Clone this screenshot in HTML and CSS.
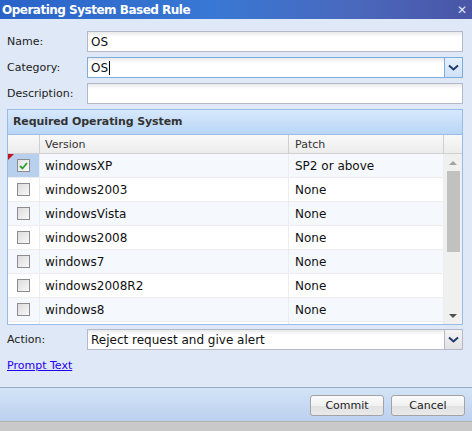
FILE: index.html
```html
<!DOCTYPE html>
<html lang="en">
<head>
    <meta charset="UTF-8">
    <title>Operating System Based Rule</title>
    <link rel="stylesheet" href="styles.css">
</head>
<body>
    <div class="window">
        <div class="titlebar">
            <span class="title">Operating System Based Rule</span>
            <span class="close">&#x2715;</span>
        </div>

        <div class="content">
            <div class="field">
                <label>Name:</label>
                <div class="input"><span>OS</span></div>
            </div>
            <div class="field">
                <label>Category:</label>
                <div class="input combo focus"><span>OS<i class="caret"></i></span>
                    <div class="trigger blue"><svg width="11" height="7" viewBox="0 0 11 7"><path d="M1 1.5 L5.5 5.5 L10 1.5" fill="none" stroke="#1f3a6e" stroke-width="2"/></svg></div>
                </div>
            </div>
            <div class="field">
                <label>Description:</label>
                <div class="input"><span></span></div>
            </div>

            <!-- grid -->
            <div class="panel">
                <div class="panel-header">Required Operating System</div>
                <div class="col-header">
                    <div class="c-check"></div>
                    <div class="c-version">Version</div>
                    <div class="c-patch">Patch</div>
                    <div class="c-scroll"></div>
                </div>
                <div class="grid-body">
                    <div class="rows">
                        <div class="row alt">
                            <div class="c-check selected"><span class="dirty"></span><span class="box checked"><svg width="9" height="8" viewBox="0 0 9 8"><path d="M1 4 L3.5 6.5 L8 1" fill="none" stroke="#2f9e2f" stroke-width="1.8"/></svg></span></div>
                            <div class="c-version">windowsXP</div>
                            <div class="c-patch">SP2 or above</div>
                        </div>
                        <div class="row">
                            <div class="c-check"><span class="box"></span></div>
                            <div class="c-version">windows2003</div>
                            <div class="c-patch">None</div>
                        </div>
                        <div class="row alt">
                            <div class="c-check"><span class="box"></span></div>
                            <div class="c-version">windowsVista</div>
                            <div class="c-patch">None</div>
                        </div>
                        <div class="row">
                            <div class="c-check"><span class="box"></span></div>
                            <div class="c-version">windows2008</div>
                            <div class="c-patch">None</div>
                        </div>
                        <div class="row alt">
                            <div class="c-check"><span class="box"></span></div>
                            <div class="c-version">windows7</div>
                            <div class="c-patch">None</div>
                        </div>
                        <div class="row">
                            <div class="c-check"><span class="box"></span></div>
                            <div class="c-version">windows2008R2</div>
                            <div class="c-patch">None</div>
                        </div>
                        <div class="row alt">
                            <div class="c-check"><span class="box"></span></div>
                            <div class="c-version">windows8</div>
                            <div class="c-patch">None</div>
                        </div>
                        <!-- next row, scrolled out of view -->
                        <div class="row">
                            <div class="c-check"></div>
                            <div class="c-version"></div>
                            <div class="c-patch"></div>
                        </div>
                    </div>
                    <div class="scrollbar">
                        <span class="arrow up"></span>
                        <div class="thumb"></div>
                        <span class="arrow down"></span>
                    </div>
                </div>
            </div>

            <div class="field action">
                <label>Action:</label>
                <div class="input combo"><span>Reject request and give alert</span>
                    <div class="trigger"><svg width="11" height="7" viewBox="0 0 11 7"><path d="M1 1.5 L5.5 5.5 L10 1.5" fill="none" stroke="#1f3a6e" stroke-width="2"/></svg></div>
                </div>
            </div>

            <a class="prompt" href="#">Prompt Text</a>
        </div>

        <div class="footer">
            <button class="btn">Commit</button>
            <button class="btn">Cancel</button>
        </div>
        <div class="statusbar"></div>
    </div>
</body>
</html>
```

FILE: styles.css
```css
body {
    margin: 0;
    padding: 0;
    font-family: "DejaVu Sans", Verdana, sans-serif;
    font-size: 11px;
    color: #222;
}
.window {
    width: 472px;
    height: 431px;
    display: flex;
    flex-direction: column;
    background-color: #dfe8f6;
    overflow: hidden;
}

/* title bar */
.titlebar {
    height: 19px;
    flex: none;
    display: flex;
    align-items: center;
    justify-content: space-between;
    padding: 0 5px 0 2px;
    background: linear-gradient(90deg, #2a63c8 0%, #3878d4 45%, #4a68bd 75%, #4a55a6 100%);
    color: #fff;
}
.title {
    font-weight: bold;
    font-size: 12px;
    letter-spacing: -0.5px;
}
.close {
    font-size: 12px;
    font-weight: bold;
    color: #dde4f2;
}

/* form */
.content {
    flex: 1;
    padding: 12px 9px 0 7px;
    display: flex;
    flex-direction: column;
}
.field {
    display: flex;
    align-items: center;
    height: 21px;
    margin-bottom: 5px;
}
.field label {
    width: 80px;
    flex: none;
    color: #222;
}
.input {
    flex: 1;
    height: 19px;
    border: 1px solid #b5b8c8;
    background: linear-gradient(#e9e9e9, #fff 5px);
    display: flex;
    align-items: center;
    font-size: 12px;
    color: #111;
}
.input span {
    padding-left: 3px;
    flex: 1;
    display: flex;
    align-items: center;
}
.input.focus {
    border-color: #7eadd9;
}
.caret {
    display: inline-block;
    width: 1px;
    height: 14px;
    background: #000;
    margin-left: 1px;
}
.trigger {
    width: 17px;
    height: 19px;
    flex: none;
    border-left: 1px solid #b5b8c8;
    background: linear-gradient(#f4f4f4, #e2e2e2);
    display: flex;
    align-items: center;
    justify-content: center;
}
.trigger.blue {
    border-left-color: #7eadd9;
    background: linear-gradient(#e5f0fd, #cfe1f8);
}

/* grid panel */
.panel {
    height: 214px;
    border: 1px solid #99bbe8;
    background: #fff;
    display: flex;
    flex-direction: column;
    margin-bottom: 4px;
}
.panel-header {
    height: 25px;
    flex: none;
    box-sizing: border-box;
    padding: 5px 5px 0;
    font-weight: bold;
    letter-spacing: -0.1px;
    color: #333;
    background: linear-gradient(#d7e8fc, #b8d6f6);
    border-bottom: 1px solid #99bbe8;
}
.col-header {
    height: 18px;
    flex: none;
    display: flex;
    background: linear-gradient(#f9f9f9, #ececec);
    border-bottom: 1px solid #d0d0d0;
    color: #333;
}
.c-check {
    width: 32px;
    flex: none;
    position: relative;
    display: flex;
    align-items: center;
    justify-content: center;
    border-right: 1px solid #ededed;
    box-sizing: border-box;
}
.c-version {
    width: 249px;
    flex: none;
    padding-left: 5px;
    box-sizing: border-box;
    display: flex;
    align-items: center;
    border-right: 1px solid #ededed;
}
.c-patch {
    width: 155px;
    flex: none;
    padding-left: 6px;
    box-sizing: border-box;
    display: flex;
    align-items: center;
}
.c-scroll {
    flex: 1;
}
.col-header .c-check,
.col-header .c-version,
.col-header .c-patch {
    border-right: 1px solid #d0d0d0;
}
.grid-body {
    flex: 1;
    display: flex;
    overflow: hidden;
}
.rows {
    width: 436px;
    overflow: hidden;
    font-size: 12px;
    color: #111;
}
.row {
    height: 24px;
    display: flex;
    box-sizing: border-box;
    border-bottom: 1px solid #ededed;
    background: #fff;
}
.row.alt {
    background: #f5f8fc;
}
.row .c-patch {
    border-right: 1px solid #ededed;
}
.c-check.selected {
    background: #b9cfee;
}
.dirty {
    position: absolute;
    left: 0;
    top: 0;
    width: 0;
    height: 0;
    border-top: 6px solid #c0151c;
    border-right: 6px solid transparent;
}
.box {
    width: 11px;
    height: 11px;
    border: 1px solid #8c8c8c;
    background: linear-gradient(135deg, #dcdcdc, #f8f8f8);
    display: flex;
    align-items: center;
    justify-content: center;
}
.box.checked {
    background: linear-gradient(135deg, #e4e4e4, #fafafa);
}
.scrollbar {
    flex: 1;
    background: #f0f0f0;
    display: flex;
    flex-direction: column;
    align-items: center;
    padding-top: 7px;
    box-sizing: border-box;
}
.arrow {
    width: 0;
    height: 0;
    border-left: 4px solid transparent;
    border-right: 4px solid transparent;
}
.arrow.up {
    border-bottom: 4px solid #a3a3a3;
    margin-bottom: 6px;
}
.arrow.down {
    border-top: 4px solid #505050;
    margin-top: auto;
    margin-bottom: 6px;
}
.thumb {
    width: 13px;
    height: 81px;
    background: #c1c1c1;
}

.action {
    margin-bottom: 0;
}
.prompt {
    margin-top: 9px;
    align-self: flex-start;
    color: #2200ee;
    text-decoration: underline;
    font-size: 11px;
}

/* footer */
.footer {
    height: 34px;
    flex: none;
    box-sizing: border-box;
    border-top: 1px solid #99a9c2;
    background: linear-gradient(#d3e4f6, #bcd0ef);
    display: flex;
    justify-content: flex-end;
    align-items: center;
    gap: 7px;
    padding: 2px 7px 0 0;
}
.btn {
    width: 74px;
    height: 21px;
    font-family: "DejaVu Sans", Verdana, sans-serif;
    font-size: 11px;
    color: #222;
    border: 1px solid #a3a3a3;
    border-radius: 3px;
    background: linear-gradient(#fbfbfb 0%, #f1f1f1 50%, #e2e2e2 51%, #e9e9e9 100%);
    padding: 0;
}
.statusbar {
    height: 9px;
    flex: none;
    background: #c9c9c9;
    border-top: 1px solid #b0b0b0;
}
```
